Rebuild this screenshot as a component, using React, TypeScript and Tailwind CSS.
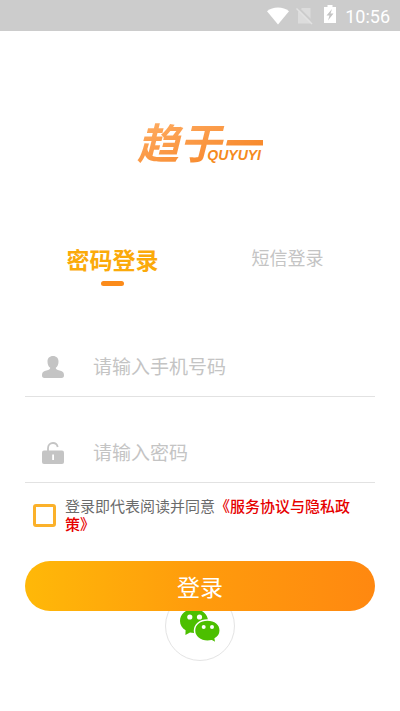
import React, { useState } from "react";

function StatusBar() {
  return (
    <header className="flex h-[31px] items-center justify-end bg-[#cccccc] pr-[10px] text-white">
      <svg className="mr-[7px] h-[18px] w-[22px]" viewBox="0 0 22 18" fill="currentColor" aria-hidden="true">
        <path d="M11 17.500 0 4.200C3 1.800 6.800.500 11 .500s8 1.300 11 3.700z" />
      </svg>
      <svg className="mr-[11px] h-[18px] w-[17px]" viewBox="0 0 17 18" aria-hidden="true">
        <path d="M6 1h8.500v15.500H2V5z" fill="#dcdcdc" />
        <path d="M1.500 0l16 16" stroke="#cccccc" strokeWidth="2" />
        <path d="M.5 1.500 16 17" stroke="#e2e2e2" strokeWidth="1.500" />
      </svg>
      <svg className="mr-[9px] mb-[3px] h-[18px] w-[12px]" viewBox="0 0 12 18" aria-hidden="true">
        <path d="M3.500 0h5v2H12v16H0V2h3.500z" fill="currentColor" />
        <path d="M8 4 2.500 10.500H5.500L4 15.500 9.500 8.500H6.500z" fill="#c4c4c4" />
      </svg>
      <span className="pt-[2px] font-[Roboto,sans-serif] text-[18px] leading-5">10:56</span>
    </header>
  );
}

function Logo() {
  return (
    <h1 className="relative mx-auto w-[126px] text-[42px] font-bold italic leading-[48px]">
      <span className="block whitespace-nowrap bg-linear-to-br from-[#ffb066] to-[#f57f0c] bg-clip-text text-transparent">
        趋于一
      </span>
      <span className="absolute right-[2px] bottom-[2px] font-['Liberation_Sans',sans-serif] text-[14px] font-bold leading-4 text-[#f58a20]">
        QUYUYI
      </span>
    </h1>
  );
}

const fieldClass =
  "min-w-0 flex-1 bg-transparent pb-[2px] text-[19px] leading-7 text-[#555555] outline-none placeholder:text-[#c4c4c4]";

export default function App() {
  const [mode, setMode] = useState("password");
  const tab = (id: string) =>
    mode === id ? "pb-[2px] text-[23px] font-bold text-[#fbaa0a]" : "pb-[6px] text-[18px] text-[#c4c4c4]";

  return (
    <div className="min-h-screen bg-white font-['Noto_Sans_CJK_SC',sans-serif]">
      <StatusBar />
      <main className="px-[25px] pt-[86px] pb-12">
        <Logo />
        <div role="tablist" className="mt-[78px] grid grid-cols-2">
          {[
            { id: "password", label: "密码登录" },
            { id: "sms", label: "短信登录" },
          ].map(({ id, label }) => (
            <button
              key={id}
              type="button"
              role="tab"
              aria-selected={mode === id}
              onClick={() => setMode(id)}
              className="flex flex-col items-center"
            >
              <span className={`flex h-[34px] items-center leading-7 ${tab(id)}`}>{label}</span>
              <span className={`mt-[4px] h-[5px] w-[23px] rounded-full ${mode === id ? "bg-[#fb8b1a]" : "bg-transparent"}`} />
            </button>
          ))}
        </div>

        <form onSubmit={(e) => e.preventDefault()}>
          <div className="mt-[52px] flex h-[59px] items-center border-b border-[#e2e2e2] pl-[17px]">
            <label htmlFor="phone" aria-label="手机号码" className="mr-[29px]">
              <svg className="h-[22px] w-[22px]" viewBox="0 0 22 22" fill="#c4c4c4" aria-hidden="true">
                <path d="M11 0C7.500 0 5.500 2.300 5.500 5.500c0 2.600.9 5 2.700 6.300 0 1.200-.5 1.700-2 2.200l-3.500 1C.8 15.700 0 17 0 19.300 0 21.300.7 22 2.500 22h17c1.800 0 2.500-.7 2.500-2.700 0-2.300-.8-3.600-2.700-4.300l-3.500-1c-1.500-.5-2-1-2-2.200 1.800-1.300 2.700-3.700 2.700-6.300C16.500 2.300 14.500 0 11 0z" />
              </svg>
            </label>
            <input id="phone" type="tel" placeholder="请输入手机号码" className={fieldClass} />
          </div>
          <div className="mt-[27px] flex h-[59px] items-center border-b border-[#e2e2e2] pl-[17px]">
            <label htmlFor="password" aria-label="密码" className="mr-[29px]">
              <svg className="h-[22px] w-[22px]" viewBox="0 0 22 22" aria-hidden="true">
                <path d="M6 10V6.200C6 3 8.200 1 11 1c2.500 0 4.200 1.500 4.700 4" fill="none" stroke="#c4c4c4" strokeWidth="1.800" />
                <rect y="8.500" width="22" height="13.500" rx="2" fill="#c4c4c4" />
                <rect x="10.200" y="12.500" width="1.800" height="5.500" fill="white" />
              </svg>
            </label>
            <input id="password" type="password" placeholder="请输入密码" className={fieldClass} />
          </div>

          <div className="mt-[14px] flex items-center pr-[20px] pl-[8px]">
            <input
              id="agree"
              type="checkbox"
              className="mr-[9px] h-[23px] w-[23px] shrink-0 appearance-none rounded-[3px] border-3 border-[#fbb12a] checked:bg-[#fbb12a]"
            />
            <label htmlFor="agree" className="text-[15px] leading-[18px] text-[#6b6b6b]">
              登录即代表阅读并同意
              <a href="#terms" className="font-medium text-[#e60000]">《服务协议与隐私政策》</a>
            </label>
          </div>

          <button
            type="submit"
            className="relative z-10 mt-[28px] flex h-[50px] w-full items-center justify-center rounded-full bg-linear-to-r from-[#ffb808] via-[#ff9b0c] to-[#ff8810] text-[23px] text-white"
          >
            登录
          </button>
        </form>

        <button
          type="button"
          aria-label="微信登录"
          className="mx-auto -mt-5 flex h-[70px] w-[70px] items-center justify-center rounded-full border border-[#e4e4e4] bg-white"
        >
          <svg className="h-[36px] w-[42px]" viewBox="0 0 42 36" aria-hidden="true">
            <path d="M15 1C6.800 1 1 6 1 13c0 4 2 7 5.600 9.200L6.400 27l4.600-2.500c1.300.3 2.600.5 4 .5 8 0 14-5 14-12S23 1 15 1z" fill="#4cbf00" />
            <path d="M28.500 12C21 12 15.500 16.500 15.500 22.500S21 33.200 28.500 33.200c1.500 0 3-.2 4.300-.5L37 35.200l-.8-4.500c3-1.800 5-4.900 5-8.200C41.200 16.500 36 12 28.500 12z" fill="#4cbf00" stroke="white" strokeWidth="1.500" />
            <circle cx="10.800" cy="9" r="2.600" fill="white" />
            <circle cx="20.500" cy="9" r="2.600" fill="white" />
            <circle cx="24.700" cy="19" r="2" fill="white" />
            <circle cx="33" cy="19" r="2" fill="white" />
          </svg>
        </button>
      </main>
    </div>
  );
}
